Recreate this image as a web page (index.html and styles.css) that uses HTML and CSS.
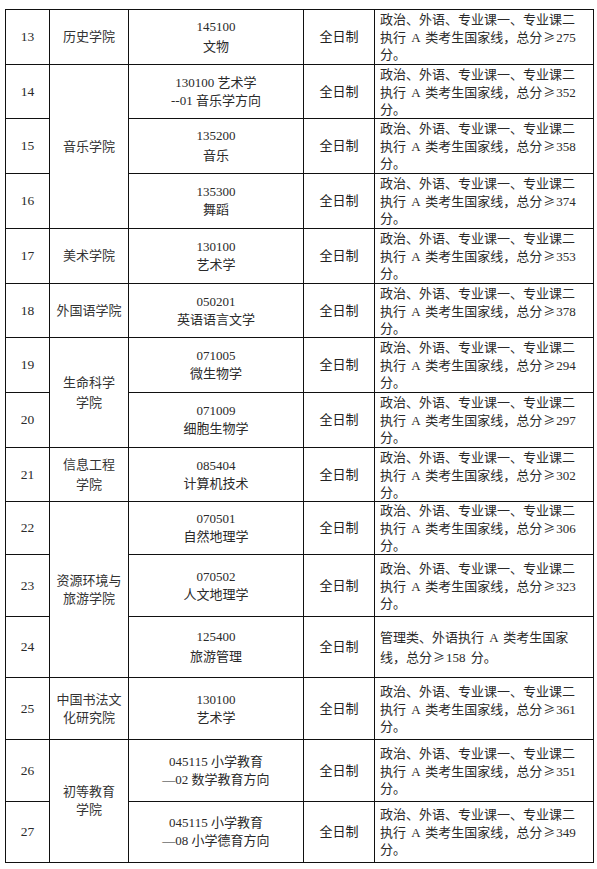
FILE: index.html
```html
<!DOCTYPE html>
<html lang="zh-CN">
<head>
<meta charset="utf-8">
<title>招生分数线</title>
<link rel="stylesheet" href="styles.css">
</head>
<body>
<table class="grid">
  <colgroup>
    <col class="c-no"><col class="c-col"><col class="c-major"><col class="c-type"><col class="c-req">
  </colgroup>
  <tbody>
    <tr class="h55">
      <td class="no">13</td>
      <td class="college">历史学院</td>
      <td class="major loose">145100<br>文物</td>
      <td class="type">全日制</td>
      <td class="req">政治、外语、专业课一、专业课二<br>执行 A 类考生国家线，总分<span class="ge">≥</span>275<br>分。</td>
    </tr>
    <tr class="h54">
      <td class="no">14</td>
      <td class="college" rowspan="3">音乐学院</td>
      <td class="major">130100 艺术学<br>--01 音乐学方向</td>
      <td class="type">全日制</td>
      <td class="req">政治、外语、专业课一、专业课二<br>执行 A 类考生国家线，总分<span class="ge">≥</span>352<br>分。</td>
    </tr>
    <tr class="h55">
      <td class="no">15</td>
      <td class="major loose">135200<br>音乐</td>
      <td class="type">全日制</td>
      <td class="req">政治、外语、专业课一、专业课二<br>执行 A 类考生国家线，总分<span class="ge">≥</span>358<br>分。</td>
    </tr>
    <tr class="h55">
      <td class="no">16</td>
      <td class="major">135300<br>舞蹈</td>
      <td class="type">全日制</td>
      <td class="req">政治、外语、专业课一、专业课二<br>执行 A 类考生国家线，总分<span class="ge">≥</span>374<br>分。</td>
    </tr>
    <tr class="h55">
      <td class="no">17</td>
      <td class="college">美术学院</td>
      <td class="major">130100<br>艺术学</td>
      <td class="type">全日制</td>
      <td class="req">政治、外语、专业课一、专业课二<br>执行 A 类考生国家线，总分<span class="ge">≥</span>353<br>分。</td>
    </tr>
    <tr class="h54">
      <td class="no">18</td>
      <td class="college">外国语学院</td>
      <td class="major">050201<br>英语语言文学</td>
      <td class="type">全日制</td>
      <td class="req">政治、外语、专业课一、专业课二<br>执行 A 类考生国家线，总分<span class="ge">≥</span>378<br>分。</td>
    </tr>
    <tr class="h55">
      <td class="no">19</td>
      <td class="college loose2" rowspan="2">生命科学<br>学院</td>
      <td class="major">071005<br>微生物学</td>
      <td class="type">全日制</td>
      <td class="req">政治、外语、专业课一、专业课二<br>执行 A 类考生国家线，总分<span class="ge">≥</span>294<br>分。</td>
    </tr>
    <tr class="h55">
      <td class="no">20</td>
      <td class="major">071009<br>细胞生物学</td>
      <td class="type">全日制</td>
      <td class="req">政治、外语、专业课一、专业课二<br>执行 A 类考生国家线，总分<span class="ge">≥</span>297<br>分。</td>
    </tr>
    <tr class="h54">
      <td class="no">21</td>
      <td class="college loose2">信息工程<br>学院</td>
      <td class="major">085404<br>计算机技术</td>
      <td class="type">全日制</td>
      <td class="req">政治、外语、专业课一、专业课二<br>执行 A 类考生国家线，总分<span class="ge">≥</span>302<br>分。</td>
    </tr>
    <tr class="h53">
      <td class="no">22</td>
      <td class="college" rowspan="3">资源环境与<br>旅游学院</td>
      <td class="major">070501<br>自然地理学</td>
      <td class="type">全日制</td>
      <td class="req">政治、外语、专业课一、专业课二<br>执行 A 类考生国家线，总分<span class="ge">≥</span>306<br>分。</td>
    </tr>
    <tr class="h62">
      <td class="no">23</td>
      <td class="major">070502<br>人文地理学</td>
      <td class="type">全日制</td>
      <td class="req">政治、外语、专业课一、专业课二<br>执行 A 类考生国家线，总分<span class="ge">≥</span>323<br>分。</td>
    </tr>
    <tr class="h61">
      <td class="no">24</td>
      <td class="major loose">125400<br>旅游管理</td>
      <td class="type">全日制</td>
      <td class="req loose">管理类、外语执行 A 类考生国家<br>线，总分<span class="ge">≥</span>158 分。</td>
    </tr>
    <tr class="h62">
      <td class="no">25</td>
      <td class="college">中国书法文<br>化研究院</td>
      <td class="major">130100<br>艺术学</td>
      <td class="type">全日制</td>
      <td class="req">政治、外语、专业课一、专业课二<br>执行 A 类考生国家线，总分<span class="ge">≥</span>361<br>分。</td>
    </tr>
    <tr class="h62">
      <td class="no">26</td>
      <td class="college" rowspan="2">初等教育<br>学院</td>
      <td class="major">045115 小学教育<br>—02 数学教育方向</td>
      <td class="type">全日制</td>
      <td class="req">政治、外语、专业课一、专业课二<br>执行 A 类考生国家线，总分<span class="ge">≥</span>351<br>分。</td>
    </tr>
    <tr class="h61">
      <td class="no">27</td>
      <td class="major">045115 小学教育<br>—08 小学德育方向</td>
      <td class="type">全日制</td>
      <td class="req">政治、外语、专业课一、专业课二<br>执行 A 类考生国家线，总分<span class="ge">≥</span>349<br>分。</td>
    </tr>
  </tbody>
</table>
</body>
</html>
```

FILE: styles.css
```css
html, body {
  margin: 0;
  padding: 0;
  background: #ffffff;
}

body {
  padding: 9px 0 0 5px;
  font-family: "Liberation Serif", "Noto Sans CJK SC", serif;
  font-size: 13px;
  color: #2a2a2a;
}

.grid {
  border-collapse: collapse;
  table-layout: fixed;
  width: 588px;
}

.c-no { width: 44px; }
.c-col { width: 79px; }
.c-major { width: 175px; }
.c-type { width: 71px; }
.c-req { width: 219px; }

.grid td {
  border: 1px solid #111;
  padding: 0 5px;
  vertical-align: middle;
  text-align: center;
  line-height: 18px;
  white-space: nowrap;
  overflow: hidden;
}

.grid td.no { font-size: 13.5px; }

.grid td.req {
  text-align: left;
  line-height: 17px;
  padding-left: 5px;
  padding-right: 2px;
  word-spacing: 2px;
}

.ge {
  font-family: "Noto Sans CJK SC", sans-serif;
  font-size: 12px;
  padding: 0 1px;
}

.grid td.major.loose { line-height: 20px; }
.grid td.req.loose { line-height: 19px; }
.grid td.college { color: #333; }
.grid td.college.loose2 { line-height: 20px; }
.grid td.type { color: #222; }

.h53 td { height: 52px; }
.h54 td { height: 53px; }
.h55 td { height: 54px; }
.h61 td { height: 60px; }
.h62 td { height: 61px; }
```
